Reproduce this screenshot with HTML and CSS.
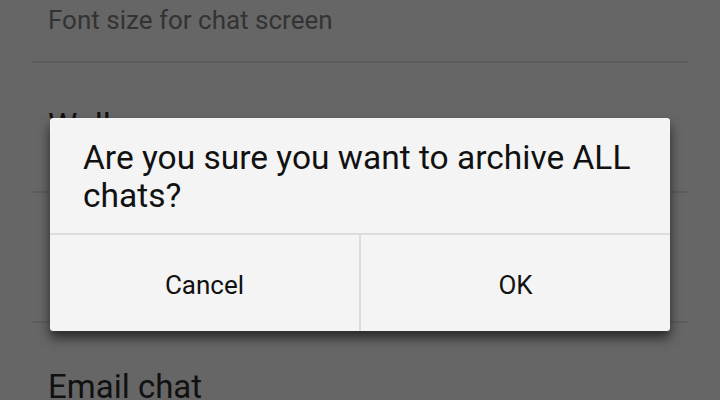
FILE: index.html
```html
<!DOCTYPE html>
<html>
<head>
<meta charset="utf-8">
<link rel="stylesheet" href="styles.css">
</head>
<body>
<div class="screen">
  <div class="list">
    <div class="item item-first">
      <div class="summary">Font size for chat screen</div>
    </div>
    <div class="item item-wall">
      <div class="title">Wallpaper</div>
    </div>
    <div class="item item-mid"></div>
    <div class="item item-email">
      <div class="title">Email chat</div>
    </div>
  </div>
  <div class="dialog">
    <div class="message">Are you sure you want to archive ALL chats?</div>
    <div class="buttons">
      <div class="btn">Cancel</div>
      <div class="btn btn-ok">OK</div>
    </div>
  </div>
</div>
</body>
</html>
```
FILE: styles.css
```css
html, body {
  margin: 0;
  padding: 0;
}
body {
  width: 720px;
  height: 400px;
  overflow: hidden;
  background: #666666;
  font-family: Roboto, "Noto Sans", sans-serif;
}
.screen {
  position: relative;
  width: 720px;
  height: 400px;
}
.list {
  padding: 0 32px;
  display: flex;
  flex-direction: column;
}
.item {
  border-bottom: 2px solid #5c5c5c;
  padding-left: 16px;
  box-sizing: border-box;
}
.item-first {
  height: 63px;
  padding-top: 5px;
}
.item-wall {
  height: 130px;
  padding-top: 44px;
}
.item-mid {
  height: 130px;
}
.item-email {
  border-bottom: none;
  padding-top: 45px;
}
.summary {
  font-size: 26px;
  line-height: 30px;
  color: #333333;
}
.title {
  font-size: 33px;
  line-height: 38px;
  color: #111111;
}
.dialog {
  position: absolute;
  left: 50px;
  top: 118px;
  width: 620px;
  height: 213px;
  background: #f4f4f4;
  border-radius: 3px;
  box-shadow: 0 7px 12px rgba(0, 0, 0, 0.6);
  display: flex;
  flex-direction: column;
}
.message {
  height: 117px;
  box-sizing: border-box;
  padding: 21px 30px 0 33px;
  font-size: 33.5px;
  line-height: 38px;
  color: #111111;
  border-bottom: 2px solid #dcdcdc;
}
.buttons {
  flex: 1;
  display: flex;
}
.btn {
  flex: 1;
  display: flex;
  align-items: center;
  justify-content: center;
  font-size: 26px;
  color: #111111;
  padding-top: 4px;
}
.btn-ok {
  border-left: 2px solid #dcdcdc;
}
```
